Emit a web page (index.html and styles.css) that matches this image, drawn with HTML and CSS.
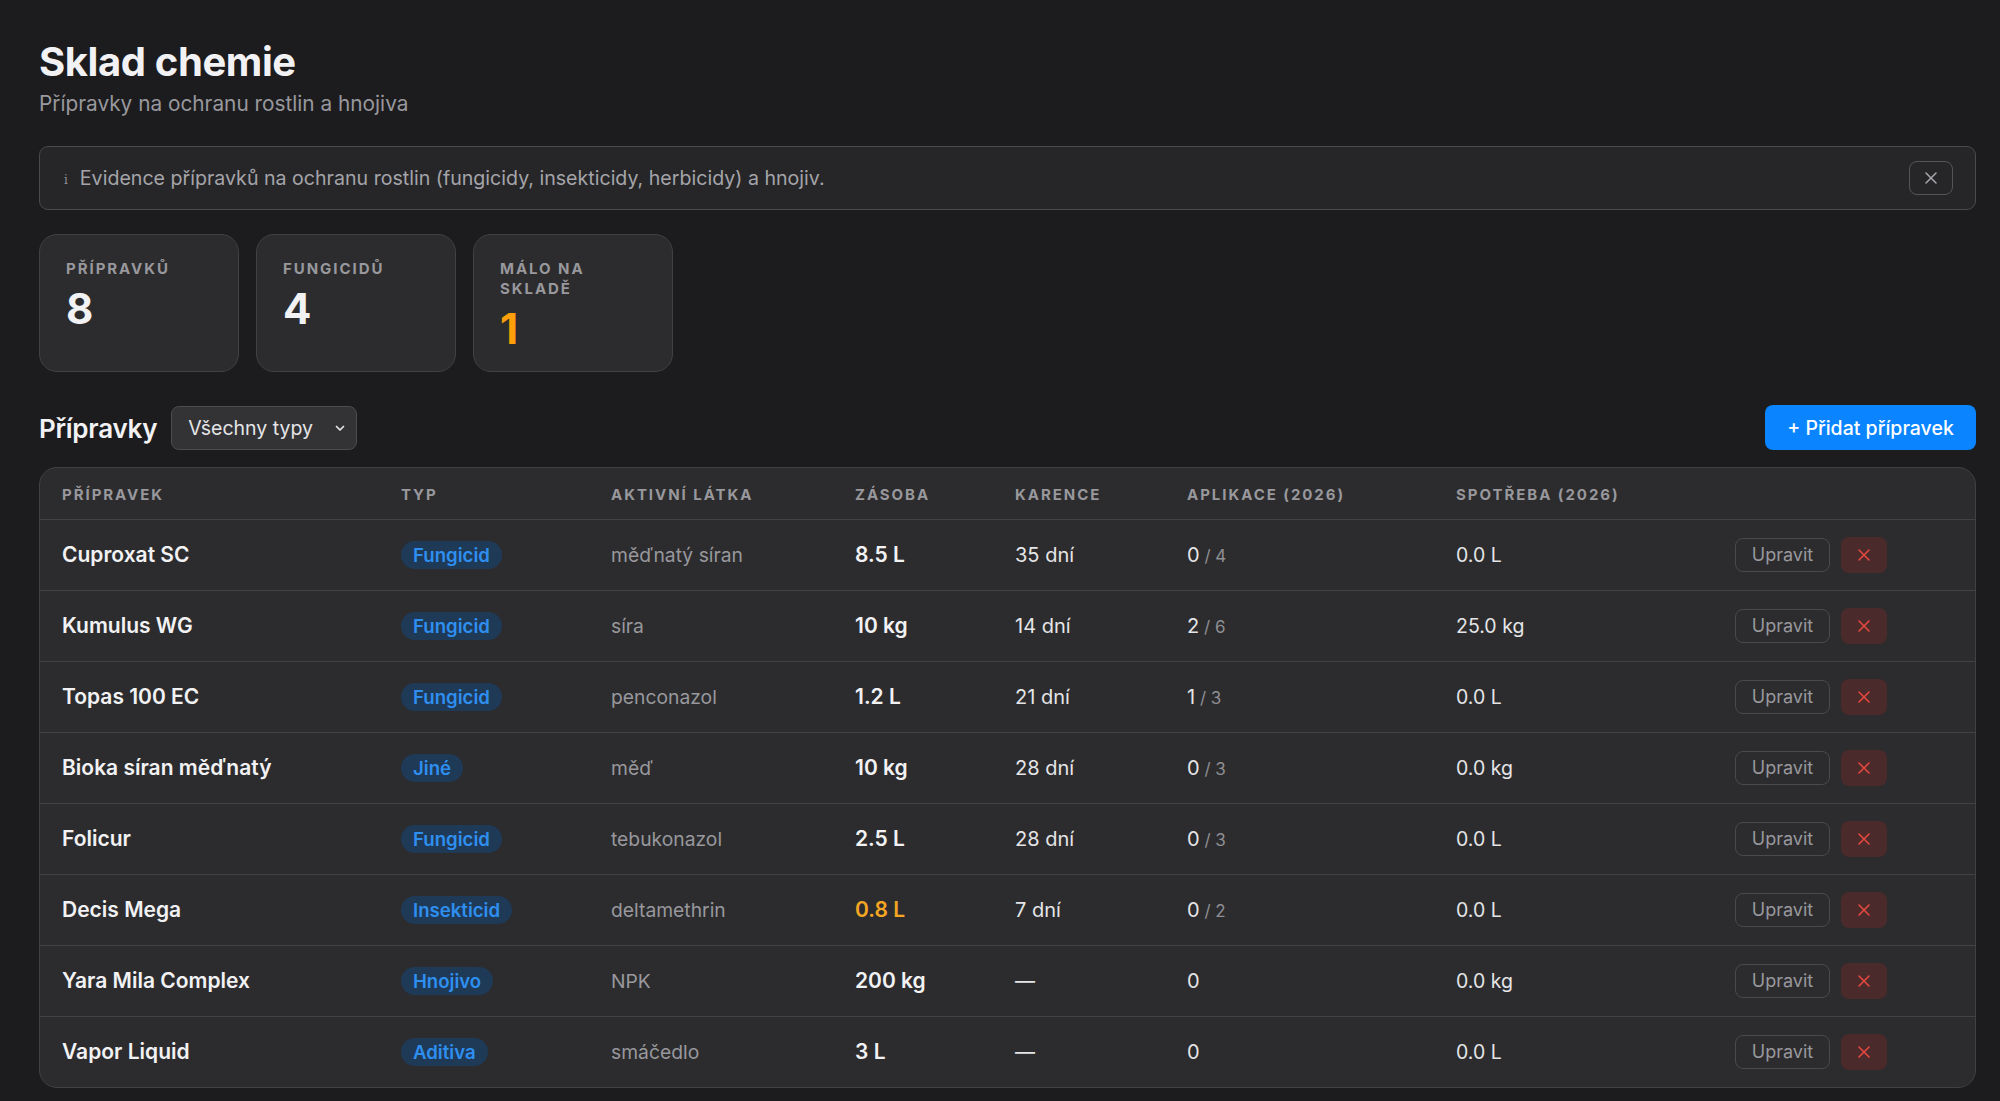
FILE: index.html
```html
<!DOCTYPE html>
<html lang="cs">
<head>
<meta charset="utf-8">
<title>Sklad chemie</title>
<link rel="stylesheet" href="styles.css">
</head>
<body>
<div class="page">
  <h1 class="title">Sklad chemie</h1>
  <p class="subtitle">Přípravky na ochranu rostlin a hnojiva</p>

  <div class="banner">
    <span class="banner-icon">i</span>
    <span class="banner-text">Evidence přípravků na ochranu rostlin (fungicidy, insekticidy, herbicidy) a hnojiv.</span>
    <button class="banner-close" type="button" aria-label="Zavřít">
      <svg width="14" height="14" viewBox="0 0 14 14"><path d="M2 2 L12 12 M12 2 L2 12" stroke="#a8a8ad" stroke-width="1.5" stroke-linecap="round"/></svg>
    </button>
  </div>

  <div class="stats">
    <div class="stat">
      <div class="stat-label">Přípravků</div>
      <div class="stat-value">8</div>
    </div>
    <div class="stat">
      <div class="stat-label">Fungicidů</div>
      <div class="stat-value">4</div>
    </div>
    <div class="stat">
      <div class="stat-label">Málo na skladě</div>
      <div class="stat-value warn">1</div>
    </div>
  </div>

  <div class="section-head">
    <h2 class="section-title">Přípravky</h2>
    <div class="select">
      <span>Všechny typy</span>
      <svg width="12" height="12" viewBox="0 0 12 12"><path d="M2.5 4.5 L6 8 L9.5 4.5" fill="none" stroke="#e5e5e7" stroke-width="1.7" stroke-linecap="round" stroke-linejoin="round"/></svg>
    </div>
    <button class="add-btn" type="button">+ Přidat přípravek</button>
  </div>

  <div class="table-wrap">
    <table class="table">
      <colgroup>
        <col class="c-name"><col class="c-type"><col class="c-active"><col class="c-stock"><col class="c-karence"><col class="c-apl"><col class="c-spot"><col class="c-act">
      </colgroup>
      <thead>
        <tr>
          <th>Přípravek</th><th>Typ</th><th>Aktivní látka</th><th>Zásoba</th><th>Karence</th><th>Aplikace (2026)</th><th>Spotřeba (2026)</th><th></th>
        </tr>
      </thead>
      <tbody>
        <tr>
          <td class="name">Cuproxat SC</td><td><span class="badge">Fungicid</span></td><td class="muted">měďnatý síran</td><td class="stock">8.5 L</td><td class="plain">35 dní</td><td class="plain"><span class="count">0</span><span class="of"> / 4</span></td><td class="spot">0.0 L</td>
          <td class="actions"><button class="edit" type="button">Upravit</button><button class="del" type="button"><svg width="14" height="14" viewBox="0 0 14 14"><path d="M2 2 L12 12 M12 2 L2 12" stroke="#e5483e" stroke-width="1.6" stroke-linecap="round"/></svg></button></td>
        </tr>
        <tr>
          <td class="name">Kumulus WG</td><td><span class="badge">Fungicid</span></td><td class="muted">síra</td><td class="stock">10 kg</td><td class="plain">14 dní</td><td class="plain"><span class="count">2</span><span class="of"> / 6</span></td><td class="spot">25.0 kg</td>
          <td class="actions"><button class="edit" type="button">Upravit</button><button class="del" type="button"><svg width="14" height="14" viewBox="0 0 14 14"><path d="M2 2 L12 12 M12 2 L2 12" stroke="#e5483e" stroke-width="1.6" stroke-linecap="round"/></svg></button></td>
        </tr>
        <tr>
          <td class="name">Topas 100 EC</td><td><span class="badge">Fungicid</span></td><td class="muted">penconazol</td><td class="stock">1.2 L</td><td class="plain">21 dní</td><td class="plain"><span class="count">1</span><span class="of"> / 3</span></td><td class="spot">0.0 L</td>
          <td class="actions"><button class="edit" type="button">Upravit</button><button class="del" type="button"><svg width="14" height="14" viewBox="0 0 14 14"><path d="M2 2 L12 12 M12 2 L2 12" stroke="#e5483e" stroke-width="1.6" stroke-linecap="round"/></svg></button></td>
        </tr>
        <tr>
          <td class="name">Bioka síran měďnatý</td><td><span class="badge">Jiné</span></td><td class="muted">měď</td><td class="stock">10 kg</td><td class="plain">28 dní</td><td class="plain"><span class="count">0</span><span class="of"> / 3</span></td><td class="spot">0.0 kg</td>
          <td class="actions"><button class="edit" type="button">Upravit</button><button class="del" type="button"><svg width="14" height="14" viewBox="0 0 14 14"><path d="M2 2 L12 12 M12 2 L2 12" stroke="#e5483e" stroke-width="1.6" stroke-linecap="round"/></svg></button></td>
        </tr>
        <tr>
          <td class="name">Folicur</td><td><span class="badge">Fungicid</span></td><td class="muted">tebukonazol</td><td class="stock">2.5 L</td><td class="plain">28 dní</td><td class="plain"><span class="count">0</span><span class="of"> / 3</span></td><td class="spot">0.0 L</td>
          <td class="actions"><button class="edit" type="button">Upravit</button><button class="del" type="button"><svg width="14" height="14" viewBox="0 0 14 14"><path d="M2 2 L12 12 M12 2 L2 12" stroke="#e5483e" stroke-width="1.6" stroke-linecap="round"/></svg></button></td>
        </tr>
        <tr>
          <td class="name">Decis Mega</td><td><span class="badge">Insekticid</span></td><td class="muted">deltamethrin</td><td class="stock low">0.8 L</td><td class="plain">7 dní</td><td class="plain"><span class="count">0</span><span class="of"> / 2</span></td><td class="spot">0.0 L</td>
          <td class="actions"><button class="edit" type="button">Upravit</button><button class="del" type="button"><svg width="14" height="14" viewBox="0 0 14 14"><path d="M2 2 L12 12 M12 2 L2 12" stroke="#e5483e" stroke-width="1.6" stroke-linecap="round"/></svg></button></td>
        </tr>
        <tr>
          <td class="name">Yara Mila Complex</td><td><span class="badge">Hnojivo</span></td><td class="muted">NPK</td><td class="stock">200 kg</td><td class="plain">—</td><td class="plain"><span class="count">0</span></td><td class="spot">0.0 kg</td>
          <td class="actions"><button class="edit" type="button">Upravit</button><button class="del" type="button"><svg width="14" height="14" viewBox="0 0 14 14"><path d="M2 2 L12 12 M12 2 L2 12" stroke="#e5483e" stroke-width="1.6" stroke-linecap="round"/></svg></button></td>
        </tr>
        <tr>
          <td class="name">Vapor Liquid</td><td><span class="badge">Aditiva</span></td><td class="muted">smáčedlo</td><td class="stock">3 L</td><td class="plain">—</td><td class="plain"><span class="count">0</span></td><td class="spot">0.0 L</td>
          <td class="actions"><button class="edit" type="button">Upravit</button><button class="del" type="button"><svg width="14" height="14" viewBox="0 0 14 14"><path d="M2 2 L12 12 M12 2 L2 12" stroke="#e5483e" stroke-width="1.6" stroke-linecap="round"/></svg></button></td>
        </tr>
      </tbody>
    </table>
  </div>
</div>
</body>
</html>
```
FILE: styles.css
```css
* { box-sizing: border-box; }

html, body {
  margin: 0;
  background: #1c1c1e;
  color: #f2f2f7;
  font-family: Inter, "Noto Sans", "Liberation Sans", sans-serif;
}

.page {
  padding: 38px 24px 0 39px;
}

.title {
  margin: 0;
  font-size: 40px;
  line-height: 48px;
  font-weight: 700;
  letter-spacing: -0.01em;
  color: #f2f2f4;
}

.subtitle {
  margin: 5px 0 0;
  font-size: 20.8px;
  line-height: 26px;
  color: #98989d;
}

.banner {
  margin-top: 29px;
  height: 64px;
  display: flex;
  align-items: center;
  padding: 0 22px 0 24px;
  background: #262628;
  border: 1px solid #4a4a4d;
  border-radius: 9px;
}

.banner-icon {
  font-family: "DejaVu Serif", "Liberation Serif", serif;
  font-size: 12px;
  color: #8e8e93;
  margin-right: 12px;
  padding-top: 3px;
}

.banner-text {
  flex: 1;
  font-size: 19.6px;
  color: #a4a4a9;
}

.banner-close {
  width: 44px;
  height: 34px;
  display: flex;
  align-items: center;
  justify-content: center;
  background: transparent;
  border: 1px solid #555558;
  border-radius: 8px;
  padding: 0;
}

.stats {
  margin-top: 24px;
  display: flex;
  gap: 17px;
}

.stat {
  width: 200px;
  padding: 24px 26px 19px;
  background: #2c2c2e;
  border: 1px solid #414144;
  border-radius: 18px;
}

.stat-label {
  font-size: 15px;
  line-height: 20px;
  font-weight: 700;
  letter-spacing: 0.13em;
  text-transform: uppercase;
  color: #98989d;
}

.stat-value {
  margin-top: 7px;
  font-size: 42px;
  line-height: 46px;
  font-weight: 700;
  color: #f2f2f4;
}

.stat-value.warn { color: #ff9f0a; }

.section-head {
  margin-top: 33px;
  display: flex;
  align-items: center;
  gap: 14px;
}

.section-title {
  margin: 0;
  font-size: 26px;
  line-height: 32px;
  font-weight: 600;
  letter-spacing: -0.01em;
  color: #f2f2f4;
  padding-top: 3px;
}

.select {
  width: 186px;
  height: 44px;
  display: flex;
  align-items: center;
  justify-content: space-between;
  padding: 0 10px 0 16px;
  background: #333336;
  border: 1px solid #4c4c4f;
  border-radius: 8px;
  font-size: 19.5px;
  color: #e5e5e7;
}

.add-btn {
  margin-left: auto;
  height: 45px;
  width: 211px;
  padding: 0;
  background: #0a84ff;
  color: #ffffff;
  border: none;
  border-radius: 8px;
  font-family: inherit;
  font-size: 19.5px;
  font-weight: 500;
}

.table-wrap {
  margin-top: 17px;
  background: #2c2c2e;
  border: 1px solid #414144;
  border-radius: 18px;
  overflow: hidden;
}

.table {
  width: 100%;
  border-collapse: collapse;
  table-layout: fixed;
}

.c-name { width: 339px; }
.c-type { width: 210px; }
.c-active { width: 244px; }
.c-stock { width: 160px; }
.c-karence { width: 172px; }
.c-apl { width: 269px; }
.c-spot { width: 279px; }

.table th {
  height: 51px;
  padding: 2px 0 0 22px;
  text-align: left;
  font-size: 15px;
  font-weight: 700;
  letter-spacing: 0.13em;
  text-transform: uppercase;
  color: #98989d;
  border-bottom: 1px solid #424245;
  white-space: nowrap;
}

.table td {
  height: 71px;
  padding: 0 0 0 22px;
  border-bottom: 1px solid #424245;
  vertical-align: middle;
  white-space: nowrap;
}

.table tbody tr:last-child td { border-bottom: none; }

.name {
  font-size: 21px;
  font-weight: 600;
  color: #f2f2f4;
}

.badge {
  display: inline-block;
  height: 28px;
  line-height: 28px;
  padding: 0 12px;
  border-radius: 14px;
  background: #1e3a57;
  color: #2f8ff0;
  font-size: 18.6px;
  font-weight: 600;
}

.muted {
  font-size: 19.3px;
  color: #98989d;
}

.stock {
  font-size: 21px;
  font-weight: 600;
  color: #f2f2f4;
}

.stock.low { color: #f5a623; }

.plain {
  font-size: 20px;
  color: #e5e5e7;
}

.count {
  font-size: 20px;
}

.of {
  font-size: 17px;
  color: #8e8e93;
}

.spot {
  font-size: 19.5px;
  color: #e5e5e7;
}

.actions {
  font-size: 0;
}

.edit {
  height: 34px;
  width: 95px;
  padding: 0;
  background: transparent;
  border: 1px solid #4a4a4d;
  border-radius: 8px;
  color: #98989d;
  font-family: inherit;
  font-size: 18px;
  vertical-align: middle;
}

.del {
  margin-left: 11px;
  height: 36px;
  width: 46px;
  background: #4a2a2a;
  border: none;
  border-radius: 8px;
  display: inline-flex;
  align-items: center;
  justify-content: center;
  vertical-align: middle;
}
```
